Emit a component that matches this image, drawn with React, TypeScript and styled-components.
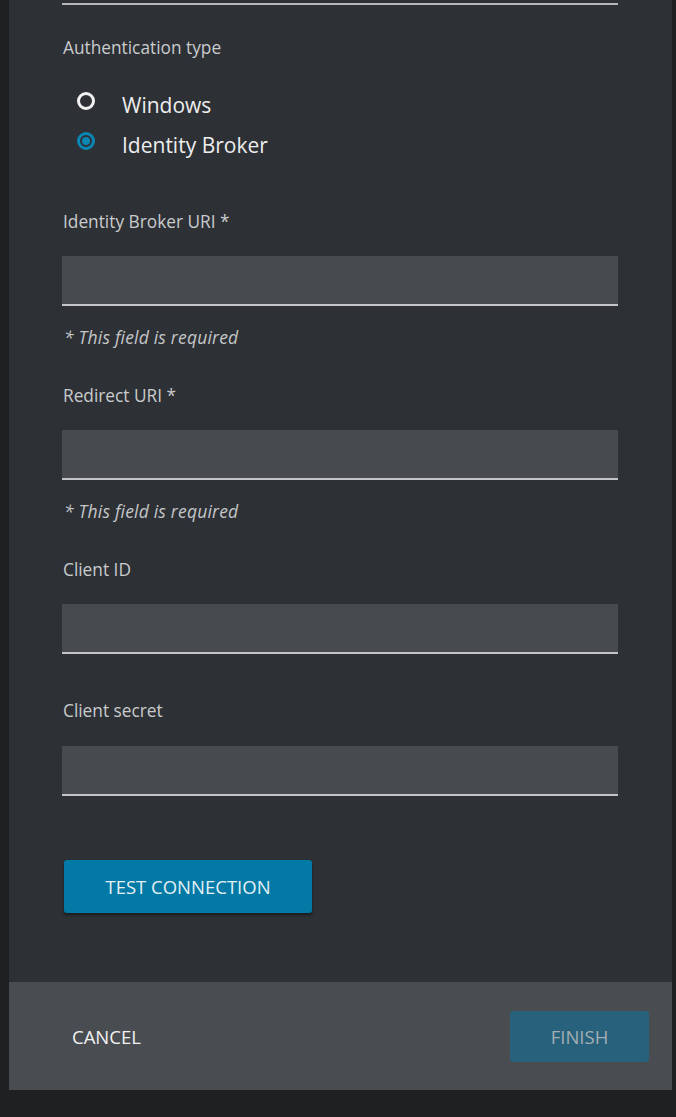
import React from "react";
import styled, { createGlobalStyle } from "styled-components";

const GlobalStyle = createGlobalStyle`
  html, body {
    margin: 0;
    padding: 0;
    background: #1f2021;
    font-family: "Open Sans", "Noto Sans", sans-serif;
  }
  * { box-sizing: border-box; }
`;

const Page = styled.div`
  width: 676px;
  height: 1117px;
  overflow: hidden;
  background: #1f2021;
`;

const Panel = styled.div`
  margin-left: 9px;
  width: 663px;
  height: 1090px;
  background: #2d3035;
  display: flex;
  flex-direction: column;
`;

const Body = styled.div`
  flex: 1;
  display: flex;
  flex-direction: column;
  padding-left: 53px;
`;

const TopRule = styled.div`
  margin-top: 3px;
  width: 556px;
  height: 2px;
  background: #b5b7ba;
`;

const Label = styled.div<{ $top: number }>`
  margin-top: ${(p) => p.$top}px;
  padding-left: 1px;
  font-size: 17.3px;
  line-height: 22px;
  color: #c9cbcd;
`;

const RadioGroup = styled.div`
  margin-top: 22px;
  display: flex;
  flex-direction: column;
`;

const RadioRow = styled.label`
  height: 40px;
  display: flex;
  align-items: center;
  gap: 27px;
  padding-left: 15px;
  font-size: 21px;
  color: #eceded;
  cursor: pointer;
`;

const RadioText = styled.span`
  padding-top: 7px;
`;

const RadioDot = styled.span<{ $checked?: boolean }>`
  width: 18px;
  height: 18px;
  margin-top: -1px;
  border-radius: 50%;
  border: 3px solid ${(p) => (p.$checked ? "#0a86b3" : "#f2f2f2")};
  display: flex;
  align-items: center;
  justify-content: center;
  &::after {
    content: "";
    width: 8px;
    height: 8px;
    border-radius: 50%;
    background: ${(p) => (p.$checked ? "#0a86b3" : "transparent")};
  }
`;

const Input = styled.div<{ $top?: number }>`
  margin-top: ${(p) => p.$top ?? 23}px;
  width: 556px;
  height: 50px;
  background: #474b50;
  border-bottom: 2px solid #c3c5c8;
`;

const Hint = styled.div`
  margin-top: 20px;
  padding-left: 2px;
  font-size: 17.5px;
  line-height: 22px;
  font-style: italic;
  letter-spacing: 0.2px;
  color: #c4c6c8;
`;

const PrimaryButton = styled.button`
  margin-top: 64px;
  margin-left: 2px;
  width: 248px;
  height: 53px;
  border: none;
  border-radius: 3px;
  background: #037aa5;
  color: #e3eff4;
  font-family: "Open Sans", "Noto Sans", sans-serif;
  font-size: 18.5px;
  box-shadow: 0 2px 3px rgba(0, 0, 0, 0.45);
  cursor: pointer;
`;

const Footer = styled.div`
  height: 108px;
  background: #494c51;
  display: flex;
  align-items: center;
  justify-content: space-between;
  padding: 0 23px 0 63px;
`;

const TextButton = styled.button`
  border: none;
  background: transparent;
  color: #f2f2f2;
  font-family: "Open Sans", "Noto Sans", sans-serif;
  font-size: 18.5px;
  padding: 0;
  cursor: pointer;
`;

const FinishButton = styled.button`
  width: 139px;
  height: 51px;
  margin-top: 1px;
  border: none;
  border-radius: 3px;
  background: #27617b;
  color: #a3adb4;
  font-family: "Open Sans", "Noto Sans", sans-serif;
  font-size: 18.5px;
`;

export default function App() {
  return (
    <Page>
      <GlobalStyle />
      <Panel>
        <Body>
          <TopRule />
          <Label $top={32}>Authentication type</Label>
          <RadioGroup>
            <RadioRow>
              <RadioDot />
              <RadioText>Windows</RadioText>
            </RadioRow>
            <RadioRow>
              <RadioDot $checked />
              <RadioText>Identity Broker</RadioText>
            </RadioRow>
          </RadioGroup>
          <Label $top={50}>Identity Broker URI *</Label>
          <Input />
          <Hint>* This field is required</Hint>
          <Label $top={37}>Redirect URI *</Label>
          <Input />
          <Hint>* This field is required</Hint>
          <Label $top={37}>Client ID</Label>
          <Input />
          <Label $top={46}>Client secret</Label>
          <Input $top={24} />
          <div>
            <PrimaryButton>TEST CONNECTION</PrimaryButton>
          </div>
        </Body>
        <Footer>
          <TextButton>CANCEL</TextButton>
          <FinishButton>FINISH</FinishButton>
        </Footer>
      </Panel>
    </Page>
  );
}
